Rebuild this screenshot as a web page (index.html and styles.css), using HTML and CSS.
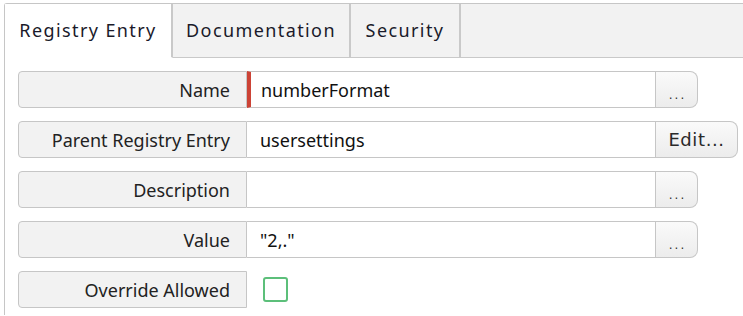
FILE: index.html
```html
<!DOCTYPE html>
<html>
<head>
<meta charset="utf-8">
<link rel="stylesheet" href="styles.css">
</head>
<body>
<div class="tabs">
  <div class="tab active">Registry Entry</div>
  <div class="tab">Documentation</div>
  <div class="tab">Security</div>
  <div class="tab-fill"></div>
</div>
<div class="panel">
  <div class="row">
    <div class="label">Name</div>
    <div class="input required">numberFormat</div>
    <div class="btn dots">...</div>
  </div>
  <div class="row">
    <div class="label">Parent Registry Entry</div>
    <div class="input">usersettings</div>
    <div class="btn edit">Edit...</div>
  </div>
  <div class="row">
    <div class="label">Description</div>
    <div class="input"></div>
    <div class="btn dots">...</div>
  </div>
  <div class="row">
    <div class="label">Value</div>
    <div class="input">"2,."</div>
    <div class="btn dots">...</div>
  </div>
  <div class="row">
    <div class="label">Override Allowed</div>
    <div class="check-wrap"><div class="check"></div></div>
  </div>
</div>
</body>
</html>
```
FILE: styles.css
```css
html, body {
  margin: 0;
  padding: 0;
  background: #fff;
  overflow: hidden;
}
body {
  font-family: "Noto Sans", "Open Sans", sans-serif;
  color: #222;
}
.tabs {
  display: flex;
  margin: 3px 0 0 4px;
  height: 55px;
  border-top: 1px solid #c6c6c6;
  border-left: 1px solid #c6c6c6;
  border-top-left-radius: 3px;
  box-sizing: border-box;
}
.tab {
  display: flex;
  align-items: center;
  justify-content: center;
  background: #f2f2f2;
  border-right: 2px solid #c9c9c9;
  border-bottom: 1px solid #c9c9c9;
  font-size: 18px;
  letter-spacing: 1.4px;
  color: #1a1a2a;
  box-sizing: border-box;
  padding-bottom: 1px;
}
.tab:nth-child(1) { width: 168px; }
.tab:nth-child(2) { width: 178px; }
.tab:nth-child(3) { width: 110px; }
.tab.active {
  background: #fff;
  border-bottom-color: #fff;
}
.tab-fill {
  flex: 1;
  background: #f2f2f2;
  border-bottom: 1px solid #c9c9c9;
}
.panel {
  margin-left: 4px;
  border-left: 1px solid #c6c6c6;
  padding: 13px 0 0 13px;
  height: 257px;
  box-sizing: border-box;
}
.row {
  display: flex;
  height: 37px;
  margin-bottom: 13px;
}
.label {
  width: 229px;
  box-sizing: border-box;
  background: #f2f2f2;
  border: 1px solid #c6c6c6;
  border-radius: 4px 0 0 4px;
  display: flex;
  align-items: center;
  justify-content: flex-end;
  padding-right: 16px;
  font-size: 18px;
  color: #222;
}
.input {
  width: 409px;
  box-sizing: border-box;
  border: 1px solid #c6c6c6;
  border-left: none;
  background: #fff;
  display: flex;
  align-items: center;
  padding-left: 13px;
  font-size: 18px;
  color: #111;
}
.input.required {
  border-left: 4px solid #cc4336;
  padding-left: 10px;
}
.btn {
  box-sizing: border-box;
  border: 1px solid #c6c6c6;
  border-left: none;
  border-radius: 0 8px 8px 0;
  background: linear-gradient(#fafafa, #ececec);
  display: flex;
  align-items: center;
  justify-content: center;
  font-family: "DejaVu Sans", sans-serif;
  color: #333;
}
.btn.dots {
  width: 42px;
  font-size: 12px;
  letter-spacing: 2px;
  padding: 10px 0 0 2px;
}
.btn.edit {
  width: 82px;
  font-size: 18px;
  letter-spacing: 0.6px;
  color: #2a2a2a;
}
.check-wrap {
  display: flex;
  align-items: center;
  padding-left: 16px;
}
.check {
  width: 25px;
  height: 25px;
  box-sizing: border-box;
  border: 2px solid #5cbf7a;
  border-radius: 3px;
  background: #fff;
}
```
